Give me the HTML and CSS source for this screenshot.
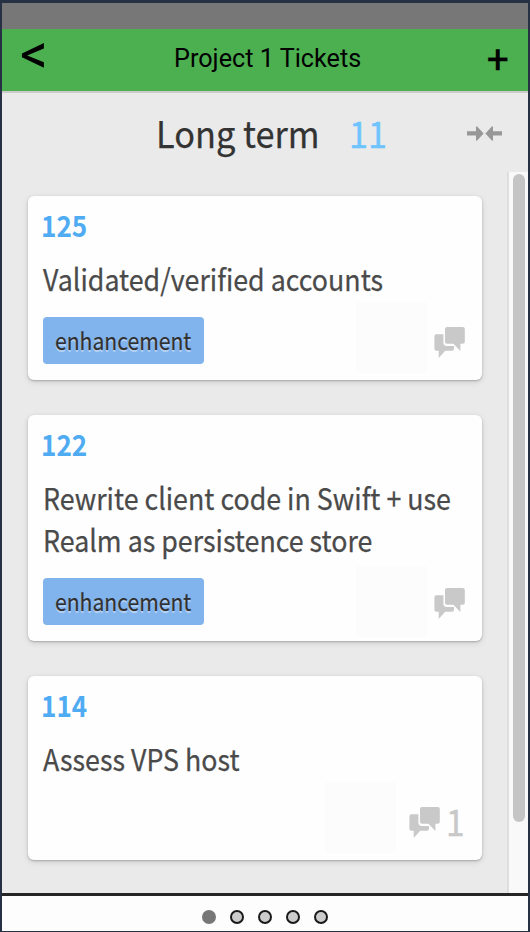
FILE: index.html
```html
<!DOCTYPE html>
<html lang="en">
<head>
<meta charset="utf-8">
<title>Project 1 Tickets</title>
<link rel="stylesheet" href="styles.css">
</head>
<body>
<svg class="defs" aria-hidden="true">
  <symbol id="chat" viewBox="0 0 31 31">
    <path d="M2.4 7.2H9.400V15.500Q9.400 18.900 12.600 18.900H20V21.800Q20 23.700 18 23.700H11.200L4.700 31V23.700H2.400Q.4 23.700 .4 21.800V9.200Q.4 7.200 2.400 7.200Z"/>
    <path d="M13 0H28.800Q30.800 0 30.800 2V14.800Q30.800 16.800 28.800 16.800H26.400V24L19.400 16.800H13Q11 16.800 11 14.800V2Q11 0 13 0Z"/>
  </symbol>
</svg>
<div class="screen">
  <div class="status"></div>
  <header class="bar">
    <span class="back">&lt;</span>
    <h1>Project 1 Tickets</h1>
    <span class="add">+</span>
  </header>
  <section class="column">
    <div class="column-head">
      <h2>Long term</h2>
      <span class="count">11</span>
      <svg class="collapse" viewBox="0 0 35 15"><path d="M0 5.300H9V1.200Q9-.4 10.400.8L16.600 7.500L10.400 14.200Q9 15.400 9 13.800V9.500H0ZM35 5.300H26V1.200Q26-.4 24.600.8L18.400 7.500L24.600 14.200Q26 15.400 26 13.800V9.500H35Z"/></svg>
    </div>
    <div class="scroller">
      <div class="cards">
        <article class="card">
          <div class="num">125</div>
          <div class="title">Validated/verified accounts</div>
          <div class="foot"><span class="tag"><span>enhancement</span></span><span class="avatar"></span><svg class="chat"><use href="#chat"/></svg></div>
        </article>
        <article class="card">
          <div class="num">122</div>
          <div class="title">Rewrite client code in Swift + use<br>Realm as persistence store</div>
          <div class="foot"><span class="tag"><span>enhancement</span></span><span class="avatar low"></span><svg class="chat"><use href="#chat"/></svg></div>
        </article>
        <article class="card">
          <div class="num">114</div>
          <div class="title">Assess VPS host</div>
          <div class="foot"><span class="avatar wide"></span><svg class="chat"><use href="#chat"/></svg><span class="replies">1</span></div>
        </article>
      </div>
      <div class="track"><div class="thumb"></div></div>
    </div>
  </section>
  <nav class="dots"><i class="on"></i><i></i><i></i><i></i><i></i></nav>
</div>
</body>
</html>
```
FILE: styles.css
```css
* { box-sizing: border-box; }
body { margin: 0; font-family: "Noto Sans CJK SC", sans-serif; }
.defs { display: none; }
.screen {
  width: 530px; height: 932px; overflow: hidden;
  display: flex; flex-direction: column;
  border: solid #263244; border-width: 3px 2px 1px;
  background: #fdfdfd;
}
.status { height: 26px; background: #777; }
.bar {
  height: 64px; display: flex; justify-content: space-between;
  background: #4caf50; border-bottom: 2px solid #cbcbcb;
  font-family: Roboto, sans-serif; color: #000;
}
.bar h1 { margin: 0; font-size: 26px; font-weight: 400; line-height: 58px; width: 190px; white-space: nowrap; transform: scaleX(.97); transform-origin: left; }
.back { width: 153px; padding-left: 18px; margin-right: 19px; font-size: 55px; line-height: 51px; }
.add { flex: 1; text-align: right; padding-right: 19px; font-size: 39px; line-height: 63px; -webkit-text-stroke: .3px #000; }
.column { flex: 1; background: #eaeaea; display: flex; flex-direction: column; }
.column-head { height: 79px; display: flex; align-items: flex-start; padding-left: 153.500px; }
.column-head h2 { margin: 0; width: 193.500px; font-size: 37px; font-weight: 400; line-height: 78px; color: #333; white-space: nowrap; transform: scaleX(.928); transform-origin: left; -webkit-text-stroke: .25px #333; }
.count { width: 118px; font-size: 37px; line-height: 78px; color: #6fc4ff; transform: scaleX(.925); transform-origin: left; -webkit-text-stroke: .4px #6fc4ff; }
.collapse { width: 35px; height: 15px; margin-top: 33px; fill: #979797; }
.scroller { flex: 1; display: flex; justify-content: space-between; }
.cards { padding: 24px 0 0 25.500px; display: flex; flex-direction: column; gap: 35px; }
.card {
  width: 454px; padding: 8px 16.500px 16.500px 15px;
  background: #fefefe; border-radius: 6px;
  box-shadow: 0 1px 2px rgba(0,0,0,.22), 0 2px 6px rgba(0,0,0,.12);
}
.num { font-size: 29px; line-height: 40px; font-weight: 700; color: #4fabf2; transform: scaleX(.9); transform-origin: left; margin-left: -2px; }
.title { margin-top: 13px; font-size: 30px; line-height: 42px; color: #4a4a4a; white-space: nowrap; transform: scaleX(.893); transform-origin: left; -webkit-text-stroke: .25px #4a4a4a; }
.foot { margin-top: 18px; height: 46.500px; display: flex; justify-content: flex-end; align-items: flex-start; }
.tag {
  width: 161.500px; height: 46.500px; margin-right: auto; padding-left: 12px;
  border-radius: 4px; background: #81b3ed; color: #303030;
  font-size: 24px; line-height: 45px; text-shadow: 0 2px 1px rgba(255,255,255,.45);
}
.tag span { display: inline-block; transform: scaleX(.88); transform-origin: left; -webkit-text-stroke: .2px #303030; }
.avatar { width: 71px; height: 71px; margin: -15px 7px -10px 0; background: #fcfcfc; }
.avatar.low { margin-top: -12px; }
.avatar.wide { margin-right: 13px; }
.chat { width: 31px; height: 31px; margin-top: 10px; fill: #c9c9c9; }
.replies { width: 20px; margin: 0 -1px 0 6px; font-size: 36px; line-height: 46px; color: #c8c8c8; transform: scaleX(.93); transform-origin: left; -webkit-text-stroke: .4px #c8c8c8; }
.track { width: 21px; padding: 2px 3px 0; background: #f9f9f9; border-left: 2px solid #dedede; }
.thumb { width: 12px; height: 648px; margin-left: auto; border-radius: 6px; background: #c5c5c5; }
.dots { height: 38px; border-top: 3px solid #252525; padding-top: 14px; display: flex; justify-content: center; gap: 14px; }
.dots i { width: 14px; height: 14px; border-radius: 50%; border: 2px solid #1a1a1a; background: #ccc; }
.dots .on { background: #777; border-color: #777; }
```
